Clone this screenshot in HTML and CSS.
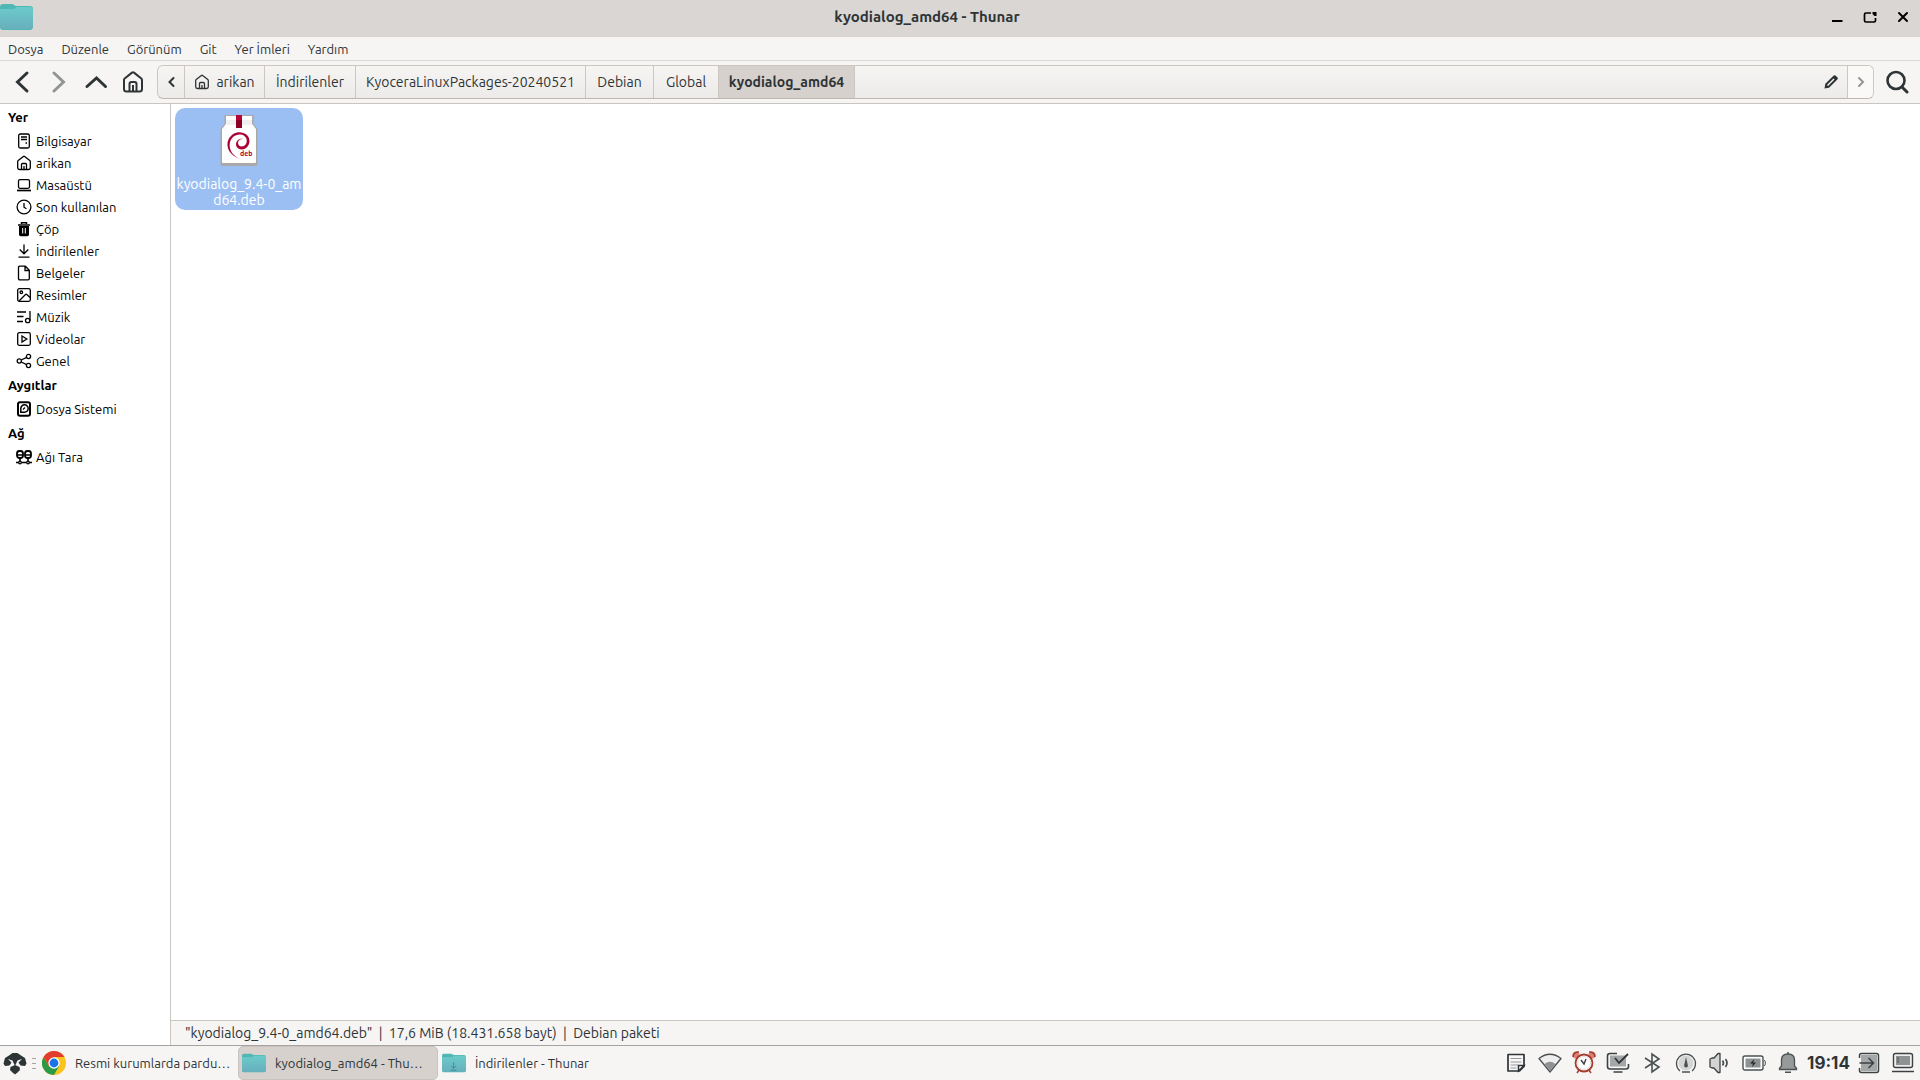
FILE: index.html
```html
<!DOCTYPE html>
<html lang="tr">
<head>
<meta charset="utf-8">
<title>kyodialog_amd64 - Thunar</title>
<link rel="stylesheet" href="styles.css">
</head>
<body>
<svg class="defs" aria-hidden="true">
  <defs>
    <linearGradient id="folder-fill" x1="0" y1="0" x2="0" y2="1"><stop offset="0" stop-color="#6bcbca"/><stop offset="1" stop-color="#68afbd"/></linearGradient>
    <symbol id="folder" viewBox="0 0 33 26">
      <path d="M0 3q0-3 3-3h9q1 0 2 1l2 1h14q3 0 3 3v17q0 4-3 4H3q-3 0-3-3z" fill="#4fb8b5"/>
      <path d="M0 5h14l3-2h13q3 0 3 3v16q0 3-3 3H3q-3 0-3-3z" fill="url(#folder-fill)"/>
    </symbol>
    <symbol id="home" viewBox="0 0 16 16">
      <path d="M1.700 6.600v6.200q0 1.700 1.700 1.700h9.200q1.700 0 1.700-1.700V6.600q0-.6-.5-1L8.600 1.400q-.6-.5-1.200 0L2.200 5.600q-.5.4-.5 1z M5.500 14.500v-5q0-1 1-1h3q1 0 1 1v5 M8 11v3.500" fill="none" stroke="currentColor" stroke-width="1.300"/>
    </symbol>
  </defs>
</svg>

<header class="titlebar">
  <svg class="title-icon" viewBox="0 0 33 26"><use href="#folder"/></svg>
  <h1 class="title">kyodialog_amd64 - Thunar</h1>
  <div class="window-buttons">
    <button aria-label="Küçült"><svg viewBox="0 0 16 16"><path d="M3 12h10.500" stroke="#000" stroke-width="2"/></svg></button>
    <button aria-label="Büyüt"><svg viewBox="0 0 16 16"><path d="M9 4H4Q2.500 4 2.500 5.500v6Q2.500 13 4 13h8q1.500 0 1.500-1.500V9" fill="none" stroke="#000" stroke-width="1.700"/><path d="M10.500 3h4v4h-2l-2-2z"/></svg></button>
    <button aria-label="Kapat"><svg viewBox="0 0 16 16"><path d="M4 4l8 8M12 4l-8 8" stroke="#000" stroke-width="2" stroke-linecap="round"/></svg></button>
  </div>
</header>

<nav class="menubar">
  <button>Dosya</button><button>Düzenle</button><button>Görünüm</button><button>Git</button><button>Yer İmleri</button><button>Yardım</button>
</nav>

<div class="toolbar">
  <button class="tool" aria-label="Geri"><svg viewBox="0 0 24 24"><path d="M17 3l-9.500 9L17 21" fill="none" stroke="currentColor" stroke-width="3" stroke-linecap="round"/></svg></button>
  <button class="tool" disabled aria-label="İleri"><svg viewBox="0 0 24 24"><path d="M7 3l9.500 9L7 21" fill="none" stroke="currentColor" stroke-width="3" stroke-linecap="round"/></svg></button>
  <button class="tool" aria-label="Yukarı"><svg viewBox="0 0 24 24"><path d="M3 16.500L12.500 8l9 8.500" fill="none" stroke="currentColor" stroke-width="3" stroke-linecap="round"/></svg></button>
  <button class="tool" aria-label="Ev"><svg viewBox="0 0 24 24"><path d="M3 10v9q0 2.500 2.500 2.500h13Q21 21.500 21 19v-9q0-1-.7-1.600L13 2.600q-1-.8-2 0L3.700 8.400Q3 9 3 10zM8.500 21.500V14q0-2 2-2h3q2 0 2 2v7.500M12 15v6.500" fill="none" stroke="currentColor" stroke-width="2"/></svg></button>
  <div class="pathbar">
    <button class="crumb step" aria-label="Önceki"><svg viewBox="0 0 10 16"><path d="M7.500 4L3.500 8l4 4" fill="none" stroke="currentColor" stroke-width="2" stroke-linecap="round"/></svg></button>
    <button class="crumb c-home"><svg viewBox="0 0 16 16"><use href="#home"/></svg>arikan</button>
    <button class="crumb c-downloads">İndirilenler</button>
    <button class="crumb c-packages">KyoceraLinuxPackages-20240521</button>
    <button class="crumb c-debian">Debian</button>
    <button class="crumb c-global">Global</button>
    <button class="crumb c-current">kyodialog_amd64</button>
    <button class="crumb edit" aria-label="Konumu düzenle"><svg viewBox="0 0 16 16"><path d="M1.500 14.500l.8-4.700L10.500 1.700q1-1 2-.2l2 2q.9 1-.1 2L6 13.700z" fill="currentColor"/><path d="M4.500 11.500l6.500-6.500" stroke="#f2f1f0" stroke-width="1.500"/></svg></button>
    <button class="crumb step next" disabled aria-label="Sonraki"><svg viewBox="0 0 10 16"><path d="M3 4l4 4-4 4" fill="none" stroke="currentColor" stroke-width="2" stroke-linecap="round"/></svg></button>
  </div>
  <button class="tool search" aria-label="Ara"><svg viewBox="0 0 24 24"><circle cx="11" cy="10.500" r="8.500" fill="none" stroke="currentColor" stroke-width="2.600"/><path d="M17 17l5 5" stroke="currentColor" stroke-width="3" stroke-linecap="round"/></svg></button>
</div>

<div class="content">
  <aside class="sidebar">
    <h2>Yer</h2>
    <a href="#"><svg viewBox="0 0 16 16" class="line"><rect x="2.700" y="1" width="10.600" height="14" rx="1.500"/><path d="M5 4h6M5 6.500h6M9.500 10h1.500"/></svg>Bilgisayar</a>
    <a href="#"><svg viewBox="0 0 16 16"><use href="#home"/></svg>arikan</a>
    <a href="#"><svg viewBox="0 0 16 16" class="line"><rect x="2.500" y="2.700" width="11" height="8.600" rx="1.500"/><path d="M1 13.500h14" stroke-width="1.700"/></svg>Masaüstü</a>
    <a href="#"><svg viewBox="0 0 16 16" class="line"><circle cx="8" cy="8" r="6.900"/><path d="M8 4v4.200l2.500 1.500"/></svg>Son kullanılan</a>
    <a href="#"><svg viewBox="0 0 16 16"><path d="M2 4h12M5.500 3V1.700h5V3" fill="none" stroke="#000" stroke-width="1.500"/><path d="M3 5h10v8.500q0 1.700-1.700 1.700H4.700Q3 15.200 3 13.500z"/><path d="M6.700 7v5.500M9.300 7v5.500" stroke="#fff"/></svg>Çöp</a>
    <a href="#"><svg viewBox="0 0 16 16" class="line"><path d="M8 1.500v9M3.700 6.500L8 10.800l4.300-4.300M2.500 14.200h11"/></svg>İndirilenler</a>
    <a href="#"><svg viewBox="0 0 16 16" class="line"><path d="M3.800 1.200h5.500l4 4v8.300q0 1.300-1.300 1.300H3.800q-1.300 0-1.300-1.300v-11q0-1.300 1.300-1.300zM9 1.200v4.300h4.300"/></svg>Belgeler</a>
    <a href="#"><svg viewBox="0 0 16 16" class="line"><rect x="1.700" y="1.700" width="12.600" height="12.600" rx="1.500"/><circle cx="5.300" cy="5.300" r="1.300"/><path d="M3 14l6.500-6.500q.7-.6 1.300 0l3.200 3"/></svg>Resimler</a>
    <a href="#"><svg viewBox="0 0 16 16" class="line"><path d="M1 3h9M1 7.500h6.500M1 12.500h6M14 2v10"/><circle cx="11.700" cy="11.500" r="2.200"/></svg>Müzik</a>
    <a href="#"><svg viewBox="0 0 16 16" class="line"><rect x="1.700" y="1.700" width="12.600" height="12.600" rx="1.500"/><path d="M6 5l4.800 3L6 11z"/></svg>Videolar</a>
    <a href="#"><svg viewBox="0 0 16 16" class="line"><circle cx="3.300" cy="8" r="2.100"/><circle cx="12.500" cy="3.500" r="2.100"/><circle cx="12.500" cy="12.500" r="2.100"/><path d="M5.200 7l5.500-2.700M5.200 9l5.500 2.700"/></svg>Genel</a>
    <h2>Aygıtlar</h2>
    <a href="#"><svg viewBox="0 0 16 16" class="line"><rect x="2" y="1.200" width="12" height="13.600" rx="2" stroke-width="2"/><path d="M4.800 11.200h3.500A3.700 3.700 0 1 0 4.800 7.500z" stroke-width="1.500"/><path d="M7 8.500l2-2"/></svg>Dosya Sistemi</a>
    <h2>Ağ</h2>
    <a href="#"><svg viewBox="0 0 16 16" class="line"><rect x="1" y="2" width="6" height="7" rx="2.500" stroke-width="1.800"/><rect x="9" y="2" width="6" height="7" rx="2.500" stroke-width="1.800"/><path d="M1 6h6M9 6h6M4 9v3M12 9v3M0 13.500h3M5.500 13.500h5M13 13.500h3" stroke-width="1.600"/><circle cx="4" cy="13.500" r="1.300"/><circle cx="12" cy="13.500" r="1.300"/></svg>Ağı Tara</a>
  </aside>
  <main class="pane">
    <div class="files">
      <button class="file">
        <svg viewBox="0 0 38 52">
          <path d="M4.500 1h29v9l4 5v34.500q0 2.500-2 2.500h-33q-2 0-2-2.500V15l4-5z" fill="#aaa8a8"/>
          <path d="M6 2h26v8l4 5v33q0 1-1 1H3q-1 0-1-1V15l4-5z" fill="#fff"/>
          <path d="M6 6h26v4l1 1H5l1-1z" fill="#f0f0f0"/>
          <path d="M16 1h6v13h-6z" fill="#8c0028"/><path d="M16 1h6v5h-6z" fill="#b50538"/>
          <path d="M20.500 45C10 42 5 33 8.500 25.500S21 16 27 21c5 5 2 14-5 14.500-5 0-7-4-5.500-7.500 1-2.500 4-4 6.500-3-4-.5-5.500 3-4.700 5.300 1 3 5.700 3 7.700-.3 2-4 0-8-4-9.200-6-1.300-11.500 2.700-12.300 9.200-.6 6 3 12 10.800 15z" fill="#ab0236"/>
          <text x="20" y="42" class="deb">deb</text>
        </svg>
        <span>kyodialog_9.4-0_am<br>d64.deb</span>
      </button>
    </div>
    <footer class="status">"kyodialog_9.4-0_amd64.deb"&nbsp; |&nbsp; 17,6 MiB (18.431.658 bayt)&nbsp; |&nbsp; Debian paketi</footer>
  </main>
</div>

<footer class="taskbar">
  <button class="launcher" aria-label="Uygulamalar"><svg viewBox="0 0 24 24"><path d="M6 4.500L9.500 2h5L18 4.500 22 7l1.500 5.500L22 15l-4.500-.5-2-3L19 8l-4.500 1.500L12 15 9.500 9.500 5 8l3.500 3.500-2 3L2 15 .5 12.500 2 7z" fill="#2d3436"/><path d="M7.500 16l4.500-2 4.500 2 .5 3-2.500 2.500L12 23.500l-2.500-2L7 19z" fill="#2d3436"/><path d="M9 6.500h6" stroke="#2d3436" stroke-width="2"/></svg></button>
  <span class="handle"></span>
  <button class="task"><svg viewBox="0 0 24 24"><circle cx="12" cy="12" r="12" fill="#fcc31e"/><path d="M1.600 6A12 12 0 0 0 12 24l5.200-9L12 12 6.800 15z" fill="#2b9a47"/><path d="M1.600 6L6.800 15 12 6h10.400A12 12 0 0 0 1.600 6z" fill="#e33b2e"/><circle cx="12" cy="12" r="5.700" fill="#fff"/><circle cx="12" cy="12" r="4.400" fill="#1a73e8"/></svg><span>Resmi kurumlarda pardu…</span></button>
  <button class="task active"><svg viewBox="0 0 33 26"><use href="#folder"/></svg><span>kyodialog_amd64 - Thu…</span></button>
  <button class="task"><svg viewBox="0 0 33 26"><use href="#folder"/><path d="M16 12v8M12.500 17l3.500 3.500 3.500-3.500M12 23h8" fill="none" stroke="#3d8b91" stroke-width="1.300"/></svg><span>İndirilenler - Thunar</span></button>
  <div class="tray">
    <button aria-label="Notlar"><svg viewBox="0 0 24 24"><path d="M4 3.500h16v12L15.500 20H4z" fill="#f7f7f7" stroke="#2d3436" stroke-width="1.700" stroke-linejoin="round"/><path d="M6.500 7.500h11M6.500 11h11M6.500 14h8M6.500 17h6" stroke="#999"/><path d="M20 14.500h-5.500V20z" fill="#fff" stroke="#2d3436" stroke-width="1.500"/></svg></button>
    <button aria-label="Ağ"><svg viewBox="0 0 24 24"><path d="M1 7.500Q12-1 23 7.500L12 21z" fill="#eee" stroke="#4a5052" stroke-width="1.300" stroke-linejoin="round"/><path d="M6.500 13Q12 8.500 17.500 13L12 20z" fill="#8f9293"/></svg></button>
    <button aria-label="Alarm"><svg viewBox="0 0 24 24"><circle cx="4" cy="4" r="3.500" fill="#d98078"/><circle cx="20" cy="4" r="3.500" fill="#d98078"/><path d="M1 6q0-5 6-5M17 1q6 0 6 5M7 19l-2 3M17 19l2 3" stroke="#a43c2c" stroke-width="1.500" fill="none"/><circle cx="12" cy="12" r="8.500" fill="#fff" stroke="#a43c2c" stroke-width="1.800"/><circle cx="12" cy="12" r="6.500" fill="none" stroke="#ddd"/><path d="M9 9l3 4 2-5" fill="none" stroke="#444" stroke-width="1.500"/></svg></button>
    <button aria-label="Güncellemeler"><svg viewBox="0 0 24 24"><path d="M4 4.500h16v11H4z" fill="#a4a7a8"/><path d="M11 2.500H4Q1.500 2.500 1.500 5v10.500Q1.500 18 4 18h16q2.500 0 2.500-2.500V13M7.500 21h9" fill="none" stroke="#3c4244" stroke-width="1.600"/><path d="M9 7l4 5 9-9" fill="none" stroke="#2d3436" stroke-width="1.800"/></svg></button>
    <button aria-label="Bluetooth"><svg viewBox="0 0 24 24"><path d="M5 7l14 9-7 5V3l7 5-14 9" fill="none" stroke="#4a5052" stroke-width="1.600"/></svg></button>
    <button aria-label="Güç"><svg viewBox="0 0 24 24"><circle cx="12" cy="12" r="7.500" fill="#d4d4d4"/><path d="M6 20a9.500 9.500 0 1 1 12 0M8 21h8" fill="none" stroke="#4a5052" stroke-width="1.300"/><path d="M12 6l2 9q-2 3-4 0z" fill="#4a5052"/></svg></button>
    <button aria-label="Ses"><svg viewBox="0 0 24 24"><path d="M2 8l2-1h2l4-4.500h2v19h-2L6 17H4l-2-1z" fill="#d4d4d4" stroke="#3c4244" stroke-width="1.300" stroke-linejoin="round"/><path d="M14.500 9.500q2 2.500 0 5M17.500 8q3 4 0 8" fill="none" stroke="#4a5052" stroke-width="1.700"/></svg></button>
    <button aria-label="Pil"><svg viewBox="0 0 24 24"><rect x="1" y="5" width="20" height="14" rx="2" fill="#fff" stroke="#4a5052" stroke-width="1.400"/><path d="M3.500 7.500h15v9h-15z" fill="#8f9293"/><path d="M22 9.500q1.300 0 1.300 1.300v2.400q0 1.300-1.300 1.300" fill="none" stroke="#4a5052"/><path d="M12.500 8L8 12.500h3L10 16l4-4.500h-3z" fill="#222"/></svg></button>
    <button aria-label="Bildirimler"><svg viewBox="0 0 24 24"><path d="M3.500 18.500v-1.300l2-2.200V9Q5.500 3 12 3t6.500 6v6l2 2.200v1.300z" fill="#969a9b" stroke="#4a5052" stroke-width="1.300"/><path d="M9 21.300h6M11 2h2" stroke="#4a5052" stroke-width="1.500"/></svg></button>
    <time class="clock">19:14</time>
    <button aria-label="Oturumu kapat"><svg viewBox="0 0 24 24"><path d="M4 4h16v16H4z" fill="#a4a7a8"/><path d="M2.500 7V4.500q0-2 2-2h15q2 0 2 2v15q0 2-2 2h-15q-2 0-2-2V17M2.500 12H16M11.500 7l5 5-5 5" fill="none" stroke="#3c4244" stroke-width="1.500"/></svg></button>
    <button aria-label="Masaüstünü göster"><svg viewBox="0 0 24 24"><rect x="2.500" y="2.500" width="19" height="14" rx="2" fill="#eee" stroke="#3c4244" stroke-width="1.400"/><path d="M5 5h14v9H5z" fill="#8f9293"/><path d="M7 6v6" stroke="#555"/><path d="M1 20.500h22" stroke="#3c4244" stroke-width="1.500"/></svg></button>
  </div>
</footer>
</body>
</html>
```
FILE: styles.css
```css
* { box-sizing: border-box; }
body {
  margin: 0;
  min-height: 100vh;
  display: flex;
  flex-direction: column;
  background: #f6f5f4;
  color: #2e3436;
  font: 14px/16px Ubuntu, "Noto Sans", sans-serif;
}
button { border: 0; padding: 0; margin: 0; background: none; color: inherit; font: inherit; white-space: nowrap; }
svg { display: block; flex: none; }
.defs { width: 0; height: 0; position: absolute; }
h1, h2 { margin: 0; }

.titlebar {
  display: flex;
  align-items: center;
  height: 37px;
  padding-bottom: 4px;
  background: #dad6d3;
}
.title-icon { width: 33px; height: 26px; }
.title { flex: 1; padding-right: 8px; text-align: center; font-size: 15px; font-weight: bold; line-height: 20px; }
.window-buttons { display: flex; justify-content: flex-end; gap: 17px; padding-right: 9px; }
.window-buttons svg { width: 16px; height: 16px; }

.menubar { display: flex; height: 24px; padding-right: 8px; border-bottom: 1px solid #dcdad8; font-size: 13px; }
.menubar button { padding: 0 9px; }
.menubar button:first-child { padding-left: 8px; }

.toolbar { display: flex; align-items: center; height: 43px; padding-left: 3px; border-bottom: 1px solid #c9c5c1; }
.tool { width: 37px; height: 36px; display: flex; align-items: center; justify-content: center; }
.tool svg { width: 24px; height: 24px; }
.tool:disabled, .next:disabled { color: #929595; }
.search { width: 46px; }
.pathbar {
  flex: 1;
  display: flex;
  height: 34px;
  margin-left: 6px;
  border: 1px solid #cdc7c2;
  border-bottom-color: #bfb8b1;
  border-radius: 6px;
  background: linear-gradient(#f6f5f4, #edebe9);
  overflow: hidden;
}
.crumb { display: flex; align-items: center; justify-content: center; gap: 6px; border-right: 1px solid #cdc7c2; }
.crumb svg { width: 16px; height: 16px; }
.step { width: 27px; }
.c-home { width: 80px; }
.c-downloads { width: 91px; }
.c-packages { width: 230px; }
.c-debian { width: 68px; }
.c-global { width: 65px; }
.c-current { width: 136px; background: #d6d1cd; font-weight: bold; }
.edit { flex: 1; justify-content: flex-end; padding-right: 8px; }
.next { width: 25px; border-right: 0; background: #faf9f8; }

.content { flex: 1; display: flex; background: #fff; }
.sidebar { width: 171px; border-right: 1px solid #c9c5c1; color: #000; font-size: 13px; }
.sidebar h2 { padding: 5px 8px; font-size: 13px; line-height: 16px; }
.sidebar a { display: flex; align-items: center; gap: 4px; height: 22px; padding-left: 16px; color: #000; text-decoration: none; }
.sidebar svg { width: 16px; height: 16px; }
.line { fill: none; stroke: #000; stroke-width: 1.3; }
.pane { flex: 1; display: flex; flex-direction: column; }
.files { flex: 1; padding: 4px; }
.file { width: 128px; height: 102px; display: flex; flex-direction: column; align-items: center; padding-top: 6px; border-radius: 10px; background: #9bbff2; color: #fff; }
.file svg { width: 38px; height: 52px; }
.file span { margin-top: 10px; }
.deb { font: bold 7px Ubuntu, "Noto Sans", sans-serif; fill: #ab0236; }
.status { height: 25px; padding: 4px 14px; border-top: 1px solid #c9c5c1; background: #f6f5f4; }

.taskbar { display: flex; align-items: center; height: 35px; border-top: 1px solid #a5a3a1; font-size: 13px; }
.launcher svg { width: 24px; height: 24px; }
.launcher { padding-left: 3px; }
.handle { width: 4px; height: 11px; margin: 0 2px 0 5px; background: repeating-linear-gradient(#a5a5a3 0 1px, transparent 1px 5px); }
.task { display: flex; align-items: center; gap: 9px; width: 200px; height: 34px; padding: 0 3px; border: 1px solid transparent; border-radius: 5px; }
.task svg { width: 24px; height: 24px; }
.active { background: #d6d1cd; border-color: #c9c4bf; }
.tray { display: flex; align-items: center; margin-left: auto; }
.tray button { width: 34px; display: flex; justify-content: center; }
.tray svg { width: 24px; height: 24px; }
.clock { width: 47px; text-align: center; font: bold 17px/24px Inter, sans-serif; }
```
